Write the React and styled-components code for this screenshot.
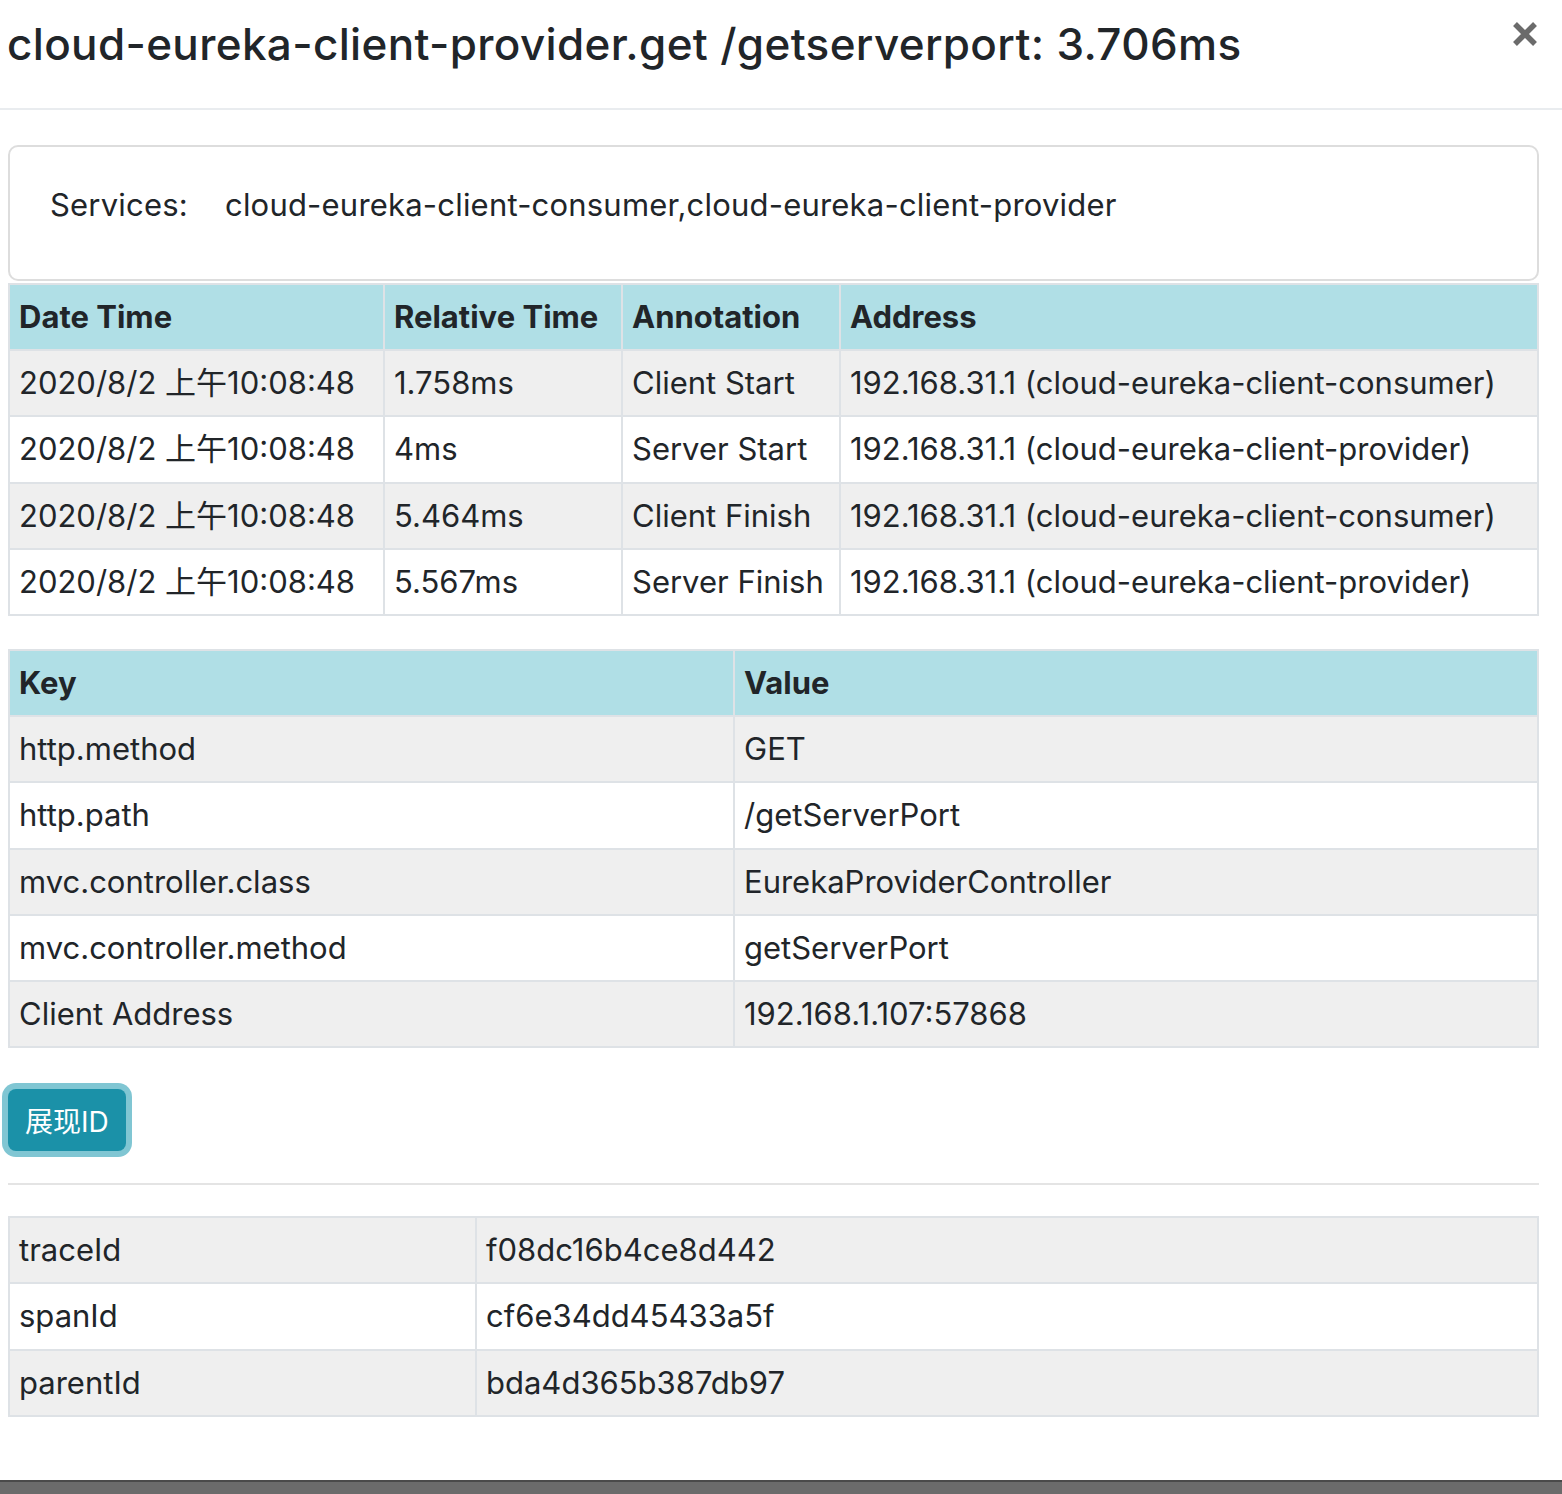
import React from 'react';
import styled, { createGlobalStyle } from 'styled-components';

const GlobalStyle = createGlobalStyle`
  html, body {
    margin: 0;
    padding: 0;
    background: #ffffff;
  }
  body {
    font-family: Inter, "Noto Sans CJK SC", "Noto Sans", sans-serif;
    color: #212529;
  }
`;

const Page = styled.div`
  width: 1562px;
  display: flex;
  flex-direction: column;
`;

const Header = styled.div`
  height: 108px;
  border-bottom: 2px solid #e9ecef;
  display: flex;
  justify-content: space-between;
  align-items: flex-start;
  padding: 0 24px 0 7px;
`;

const Title = styled.h4`
  margin: 0;
  padding-top: 13px;
  font-size: 44px;
  line-height: 62px;
  font-weight: 500;
  letter-spacing: 0.35px;
  color: #212529;
`;

const Close = styled.button`
  border: none;
  background: none;
  padding: 0;
  margin-top: 22px;
  width: 26px;
  height: 24px;
  cursor: pointer;
  display: flex;
`;

const Body = styled.div`
  padding: 35px 23px 63px 8px;
  display: flex;
  flex-direction: column;
`;

const Card = styled.div`
  height: 132px;
  border: 2px solid #dddddd;
  border-radius: 10px;
  display: flex;
  align-items: center;
  padding-left: 40px;
  font-size: 31px;
  letter-spacing: 0.2px;
  margin-bottom: 2px;
`;

const CardLabel = styled.span`
  width: 175px;
  padding-bottom: 17px;
`;

const CardValue = styled.span`
  padding-bottom: 17px;
`;

const Table = styled.table`
  width: 100%;
  table-layout: fixed;
  border-collapse: collapse;
  border: 2px solid #dee2e6;
  font-size: 31px;
  margin-top: ${props => props.gap || 0}px;
`;

const Th = styled.th`
  background: #b0dfe6;
  text-align: left;
  font-weight: 700;
  padding: 9px 9px;
  line-height: 46.2px;
  border: 2px solid #dee2e6;
  white-space: nowrap;
`;

const Tr = styled.tr`
  background: ${props => props.striped ? '#efefef' : '#ffffff'};
`;

const Td = styled.td`
  padding: 9px 9px;
  line-height: 46.2px;
  border: 2px solid #dee2e6;
  white-space: nowrap;
  overflow: hidden;
`;

const Button = styled.button`
  align-self: flex-start;
  margin-top: 41px;
  height: 62px;
  padding: 0 17px;
  border: none;
  border-radius: 8px;
  background: #1b91a8;
  color: #ffffff;
  font-family: inherit;
  font-size: 28px;
  box-shadow: 0 0 0 6px #80c6d3;
  cursor: pointer;
`;

const Divider = styled.hr`
  margin: 32px 0 31px;
  border: none;
  border-top: 2px solid #e4e4e4;
`;

const BottomBar = styled.div`
  height: 12px;
  border-top: 2px solid #4a4a4a;
  background: #6b6b6b;
`;

const annotations = [
  ['2020/8/2 上午10:08:48', '1.758ms', 'Client Start', '192.168.31.1 (cloud-eureka-client-consumer)'],
  ['2020/8/2 上午10:08:48', '4ms', 'Server Start', '192.168.31.1 (cloud-eureka-client-provider)'],
  ['2020/8/2 上午10:08:48', '5.464ms', 'Client Finish', '192.168.31.1 (cloud-eureka-client-consumer)'],
  ['2020/8/2 上午10:08:48', '5.567ms', 'Server Finish', '192.168.31.1 (cloud-eureka-client-provider)'],
];

const tags = [
  ['http.method', 'GET'],
  ['http.path', '/getServerPort'],
  ['mvc.controller.class', 'EurekaProviderController'],
  ['mvc.controller.method', 'getServerPort'],
  ['Client Address', '192.168.1.107:57868'],
];

const ids = [
  ['traceId', 'f08dc16b4ce8d442'],
  ['spanId', 'cf6e34dd45433a5f'],
  ['parentId', 'bda4d365b387db97'],
];

const App = () => {
  return (
    <Page>
      <GlobalStyle />
      <Header>
        <Title>cloud-eureka-client-provider.get /getserverport: 3.706ms</Title>
        <Close aria-label="Close">
          <svg width="26" height="24" viewBox="0 0 26 24">
            <path d="M3 2 L23 22 M23 2 L3 22" stroke="#6b6b6b" strokeWidth="5.5" />
          </svg>
        </Close>
      </Header>
      <Body>
        <Card>
          <CardLabel>Services:</CardLabel>
          <CardValue>cloud-eureka-client-consumer,cloud-eureka-client-provider</CardValue>
        </Card>

        <Table>
          <colgroup>
            <col style={{ width: 375 }} />
            <col style={{ width: 238 }} />
            <col style={{ width: 218 }} />
            <col />
          </colgroup>
          <thead>
            <tr>
              <Th>Date Time</Th>
              <Th>Relative Time</Th>
              <Th>Annotation</Th>
              <Th>Address</Th>
            </tr>
          </thead>
          <tbody>
            {annotations.map((row, i) => (
              <Tr key={i} striped={i % 2 === 0}>
                {row.map((cell, j) => <Td key={j}>{cell}</Td>)}
              </Tr>
            ))}
          </tbody>
        </Table>

        <Table gap={33}>
          <colgroup>
            <col style={{ width: 725 }} />
            <col />
          </colgroup>
          <thead>
            <tr>
              <Th>Key</Th>
              <Th>Value</Th>
            </tr>
          </thead>
          <tbody>
            {tags.map((row, i) => (
              <Tr key={i} striped={i % 2 === 0}>
                <Td>{row[0]}</Td>
                <Td>{row[1]}</Td>
              </Tr>
            ))}
          </tbody>
        </Table>

        <Button>展现ID</Button>

        <Divider />

        <Table>
          <colgroup>
            <col style={{ width: 467 }} />
            <col />
          </colgroup>
          <tbody>
            {ids.map((row, i) => (
              <Tr key={i} striped={i % 2 === 0}>
                <Td>{row[0]}</Td>
                <Td>{row[1]}</Td>
              </Tr>
            ))}
          </tbody>
        </Table>
      </Body>
      <BottomBar />
    </Page>
  );
};

export default App;
